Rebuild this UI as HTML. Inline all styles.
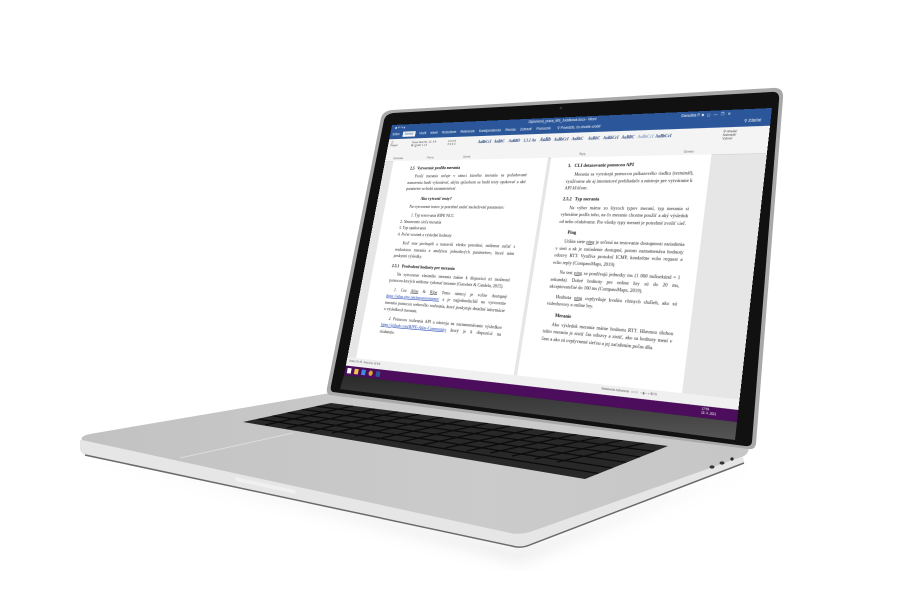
<!DOCTYPE html>
<html><head><meta charset="utf-8">
<style>
html,body{margin:0;padding:0;background:#fff;width:900px;height:600px;overflow:hidden;position:relative;font-family:"Liberation Serif",serif}
svg{position:absolute;left:0;top:0}
#scr{position:absolute;left:0;top:0;width:800px;height:500px;transform-origin:0 0;
transform:matrix3d(0.285625,-0.04775,0,-0.00024531,-0.13078,0.46208,0,-0.00010111,0,0,1,0,392,125,0,1);
background:#e6e6e6;overflow:hidden}
.title{position:absolute;left:0;top:0;width:800px;height:30px;background:#2b579a;color:#fff;font:7px "Liberation Sans",sans-serif}
.ribbon{position:absolute;left:0;top:30px;width:800px;height:46px;background:#f4f4f4;border-bottom:1px solid #d0d0d0;font:6px "Liberation Sans",sans-serif;color:#444}
.page{position:absolute;top:76px;background:#fff;height:390px;overflow:hidden}
.page p{margin:0 0 5px;font-size:9px;line-height:12.5px;color:#222;text-align:justify;text-indent:16px}
.page h4{margin:8px 0 5px;font-size:9px;color:#111}
.status{position:absolute;left:0;top:466px;width:800px;height:16px;background:#f0f0f0;font:5px "Liberation Sans",sans-serif;color:#555}
.task{position:absolute;left:0;top:482px;width:800px;height:18px;background:#4b0d5c}
.sty{display:inline-block;width:34px;text-align:center;font-size:8px;color:#1f3f7a;font-family:"Liberation Serif",serif;font-style:italic;font-weight:bold}
</style></head><body>
<svg width="900" height="600" viewBox="0 0 900 600">
<defs>
<linearGradient id="deck" x1="0" y1="0" x2="1" y2="0"><stop offset="0" stop-color="#c2c2c2"/><stop offset="0.6" stop-color="#cbcbcb"/><stop offset="1" stop-color="#c6c6c6"/></linearGradient>
<linearGradient id="lidb" x1="0" y1="0" x2="0" y2="1"><stop offset="0" stop-color="#2a2a2a"/><stop offset="1" stop-color="#555"/></linearGradient>
<filter id="bl"><feGaussianBlur stdDeviation="8"/></filter>
<clipPath id="kb"><polygon points="243,422 331,403 668,446 585,479"/></clipPath>
</defs>
<polygon points="90,450 520,552 750,465 520,560" fill="#bbb" opacity="0.5" filter="url(#bl)"/>
<path d="M80,440 L80,450 Q82,455 90,457 L512,545 Q522,548 532,543 L744,462 L742,452 Z" fill="#e6e6e6"/>
<path d="M85,455 L512,546 Q522,549 532,544 L744,463" fill="none" stroke="#6a6a6a" stroke-width="1.5"/>
<path d="M82,440 Q80,436 90,434 L330,393 L748,447 Q750,452 744,456 L530,532 Q520,535 510,533 Z" fill="url(#deck)"/>
<polygon points="243,422 331,403 668,446 585,479" fill="#282828"/>
<g clip-path="url(#kb)" stroke="#0c0c0c" stroke-width="1.3">
<line x1="316.3" y1="406.2" x2="654.2" y2="451.5"/><line x1="301.7" y1="409.3" x2="640.3" y2="457"/>
<line x1="287" y1="412.5" x2="626.5" y2="462.5"/><line x1="272.3" y1="415.7" x2="612.7" y2="468"/>
<line x1="257.7" y1="418.8" x2="598.8" y2="473.5"/>
<line x1="353" y1="406" x2="265" y2="425"/><line x1="375" y1="409" x2="287" y2="428"/>
<line x1="398" y1="412" x2="310" y2="431"/><line x1="420" y1="414" x2="332" y2="433"/>
<line x1="443" y1="417" x2="355" y2="436"/><line x1="465" y1="420" x2="377" y2="439"/>
<line x1="488" y1="423" x2="400" y2="442"/><line x1="510" y1="426" x2="422" y2="445"/>
<line x1="533" y1="429" x2="445" y2="448"/><line x1="555" y1="432" x2="467" y2="451"/>
<line x1="578" y1="434" x2="490" y2="453"/><line x1="600" y1="437" x2="512" y2="456"/>
<line x1="623" y1="440" x2="535" y2="459"/><line x1="645" y1="443" x2="557" y2="462"/>
</g>
<line x1="180" y1="458" x2="293" y2="433" stroke="#e0e0e0" stroke-width="0.8"/>
<polygon points="235,477 295,490 296,494 236,481" fill="#f0f0f0"/>
<ellipse cx="712" cy="467" rx="2.5" ry="1.6" fill="#333"/>
<ellipse cx="722" cy="463" rx="2.5" ry="1.6" fill="#333"/>
<circle cx="732" cy="459" r="1.6" fill="#222"/>
<path d="M392,110 L772,88 Q784,87 783,98 L756,444 Q755,450 748,449 L330,395 Q326,394 327,388 L381,118 Q383,111 392,110 Z" fill="#a9a9a9"/>
<path d="M393,113 L771,92 Q780,91 779,100 L752,442 Q751,447 745,446 L333,392 Q330,391 331,386 L384,120 Q386,114 393,113 Z" fill="#111"/>
<polygon points="344,375 737,422 735,440 340,389" fill="url(#lidb)"/>
<circle cx="561" cy="108" r="1.3" fill="#333"/>
</svg>
<div id="scr">
 <div class="title">
  <div style="position:absolute;left:10px;top:3px">&#9632; &#8630; &#8631; &#9662;</div>
  <div style="position:absolute;left:330px;top:3px">Diplomová_práca_MS_Jurášková.docx - Word</div>
  <div style="position:absolute;left:640px;top:3px">Danuška P. &#9632;&nbsp;&nbsp; &#9723; &nbsp; &#8212; &nbsp; &#10064; &nbsp; &#10005;</div>
  <div style="position:absolute;left:0;top:16px;width:800px;height:14px">
   <span style="margin-left:6px">Súbor</span>
   <span style="background:#f4f4f4;color:#2b579a;padding:2px 5px;margin-left:6px">Domov</span>
   <span style="margin-left:8px">Vložiť</span><span style="margin-left:10px">Návrh</span><span style="margin-left:10px">Rozloženie</span><span style="margin-left:10px">Referencie</span><span style="margin-left:10px">Korešpondencia</span><span style="margin-left:10px">Revízia</span><span style="margin-left:10px">Zobraziť</span><span style="margin-left:10px">Pomocník</span><span style="margin-left:14px">&#9906; Povedzte, čo chcete urobiť</span>
   <span style="position:absolute;right:16px">&#9906; Zdieľať</span>
  </div>
 </div>
 <div class="ribbon">
  <div style="position:absolute;left:6px;top:4px;width:40px">&#128203;<br>Prilepiť</div>
  <div style="position:absolute;left:60px;top:6px">Times New Ro &nbsp;12 &nbsp;A A<br><b>B</b> <i>I</i> <u>U</u> abc x x A</div>
  <div style="position:absolute;left:150px;top:6px">&#8801; &#8801; &#8801; &#182;<br>&#8801; &#8801; &#8801; &#8801;</div>
  <div style="position:absolute;left:220px;top:6px;white-space:nowrap"><span class="sty">AaBbCcI</span><span class="sty">AaBbC</span><span class="sty">AaBBO</span><span class="sty">1.1.1 Aa</span><span class="sty" style="font-size:10px">AaBb</span><span class="sty">AaBbCcI</span><span class="sty">AaBbC</span><span class="sty">AaBbC</span><span class="sty">AaBbCcI</span><span class="sty">AaBBC</span><span class="sty" style="color:#8aa0c8">AaBbCcI</span><span class="sty">AaBbCcI</span></div>
  <div style="position:absolute;left:720px;top:4px">&#9906; Hľadať<br>Nahradiť<br>Vybrať</div>
  <div style="position:absolute;left:0;top:38px;width:800px;color:#666"><span style="margin-left:20px">Schránka</span><span style="margin-left:60px">Písmo</span><span style="margin-left:70px">Odsek</span><span style="margin-left:240px">Štýly</span><span style="margin-left:190px">Úpravy</span></div>
 </div>
 <div class="page" style="left:22px;width:363px">
  <div style="padding:2px 40px 0 46px">
   <h4>2.5 &nbsp; Vytvorenie profilu merania</h4>
   <p>Profil merania určuje v rámci ktorého merania sa požadované nastavenia budú vykonávať, akým spôsobom sa budú testy opakovať a aké parametre sa budú zaznamenávať.</p>
   <h4 style="margin-left:40px">Ako vytvoriť testy?</h4>
   <p>Na vytvorenie testov je potrebné zadať nasledovné parametre:</p>
   <p style="text-indent:24px">1. Typ testovania RIPE NCC<br>2. Nastavenie cieľa merania<br>3. Typ opakovania<br>4. Počet vzoriek a výsledné hodnoty</p>
   <p>Keď sme pochopili a nastavili všetko potrebné, môžeme začať s realizáciou merania a analýzou jednotlivých parametrov, ktoré nám poskytnú výsledky.</p>
   <h4>2.5.1 &nbsp; Predvolené hodnoty pre merania</h4>
   <p>Na vytvorenie vlastného merania máme k dispozícii tri možnosti pomocou ktorých môžeme vykonať meranie (Gavaletz &amp; Candela, 2015).</p>
   <p>1. Cez <u>Atlas</u> &amp; <u>Ripe</u> Tento nástroj je voľne dostupný <u style="color:#1a3fb0">https://atlas.ripe.net/measurements/</u> a je najjednoduchší na vytvorenie merania pomocou webového rozhrania, ktoré poskytuje detailné informácie o výsledkoch merania.</p>
   <p>2. Pomocou rozhrania API a nástroja na zaznamenávanie výsledkov <u style="color:#1a3fb0">https://github.com/RIPE-Atlas-Community</u> ktorý je k dispozícii na stiahnutie.</p>
  </div>
 </div>
 <div class="page" style="left:392px;width:312px">
  <div style="padding:2px 28px 0 38px">
   <h4>3. &nbsp; CLI dotazovanie pomocou API</h4>
   <p>Merania sa vytvárajú pomocou príkazového riadku (terminál), využívame ale aj internetové prehliadače a nástroje pre vytváranie k API kľúčom.</p>
   <h4>2.5.2 &nbsp; Typ merania</h4>
   <p>Na výber máme zo štyroch typov meraní, typ merania si vyberáme podľa toho, na čo meranie chceme použiť a aký výsledok od neho očakávame. Pre všetky typy meraní je potrebné zvoliť cieľ.</p>
   <h4 style="margin-left:20px">Ping</h4>
   <p>Utilita siete <u>ping</u> je určená na testovanie dostupnosti zariadenia v sieti a ak je zariadenie dostupné, potom zaznamenáva hodnoty odozvy RTT. Využíva protokol ICMP, konkrétne echo request a echo reply (CompassMaps, 2019).</p>
   <p>Na test <u>ping</u> sa používajú jednotky ms (1 000 milisekúnd = 1 sekunda). Dobré hodnoty pre online hry sú do 20 ms, akceptovateľné do 100 ms (CompassMaps, 2019).</p>
   <p>Hodnota <u>ping</u> ovplyvňuje kvalitu rôznych služieb, ako sú videohovory a online hry.</p>
   <h4 style="margin-left:20px">Meranie</h4>
   <p>Ako výsledok merania máme hodnotu RTT. Hlavnou úlohou tohto merania je zistiť čas odozvy a zistiť, ako sa hodnoty mení v čase a ako sú ovplyvnené sieťou a jej zaťažením počas dňa.</p>
  </div>
 </div>
 <div class="status"><span style="position:absolute;left:6px;top:4px">Strana 13 z 66 &nbsp; Počet slov: 18 676</span><span style="position:absolute;left:560px;top:4px">Nastavenia zobrazenia &nbsp; &#9633; &#9633; &#9633; &nbsp; &#8212;&#9646;&#8212; + 80 %</span></div>
 <div class="task">
  <span style="position:absolute;left:6px;top:4px;width:10px;height:10px;background:#fff"></span>
  <span style="position:absolute;left:24px;top:4px;width:10px;height:10px;background:#f2c14e"></span>
  <span style="position:absolute;left:42px;top:4px;width:10px;height:10px;background:#3b8edc"></span>
  <span style="position:absolute;left:60px;top:4px;width:10px;height:10px;background:#e5a33a;border-radius:50%"></span>
  <span style="position:absolute;left:78px;top:4px;width:10px;height:10px;background:#2b579a"></span>
  <span style="position:absolute;left:740px;top:2px;color:#fff;font:5px 'Liberation Sans',sans-serif">17:54<br>20. 4. 2021</span>
 </div>
</div>
</body></html>
